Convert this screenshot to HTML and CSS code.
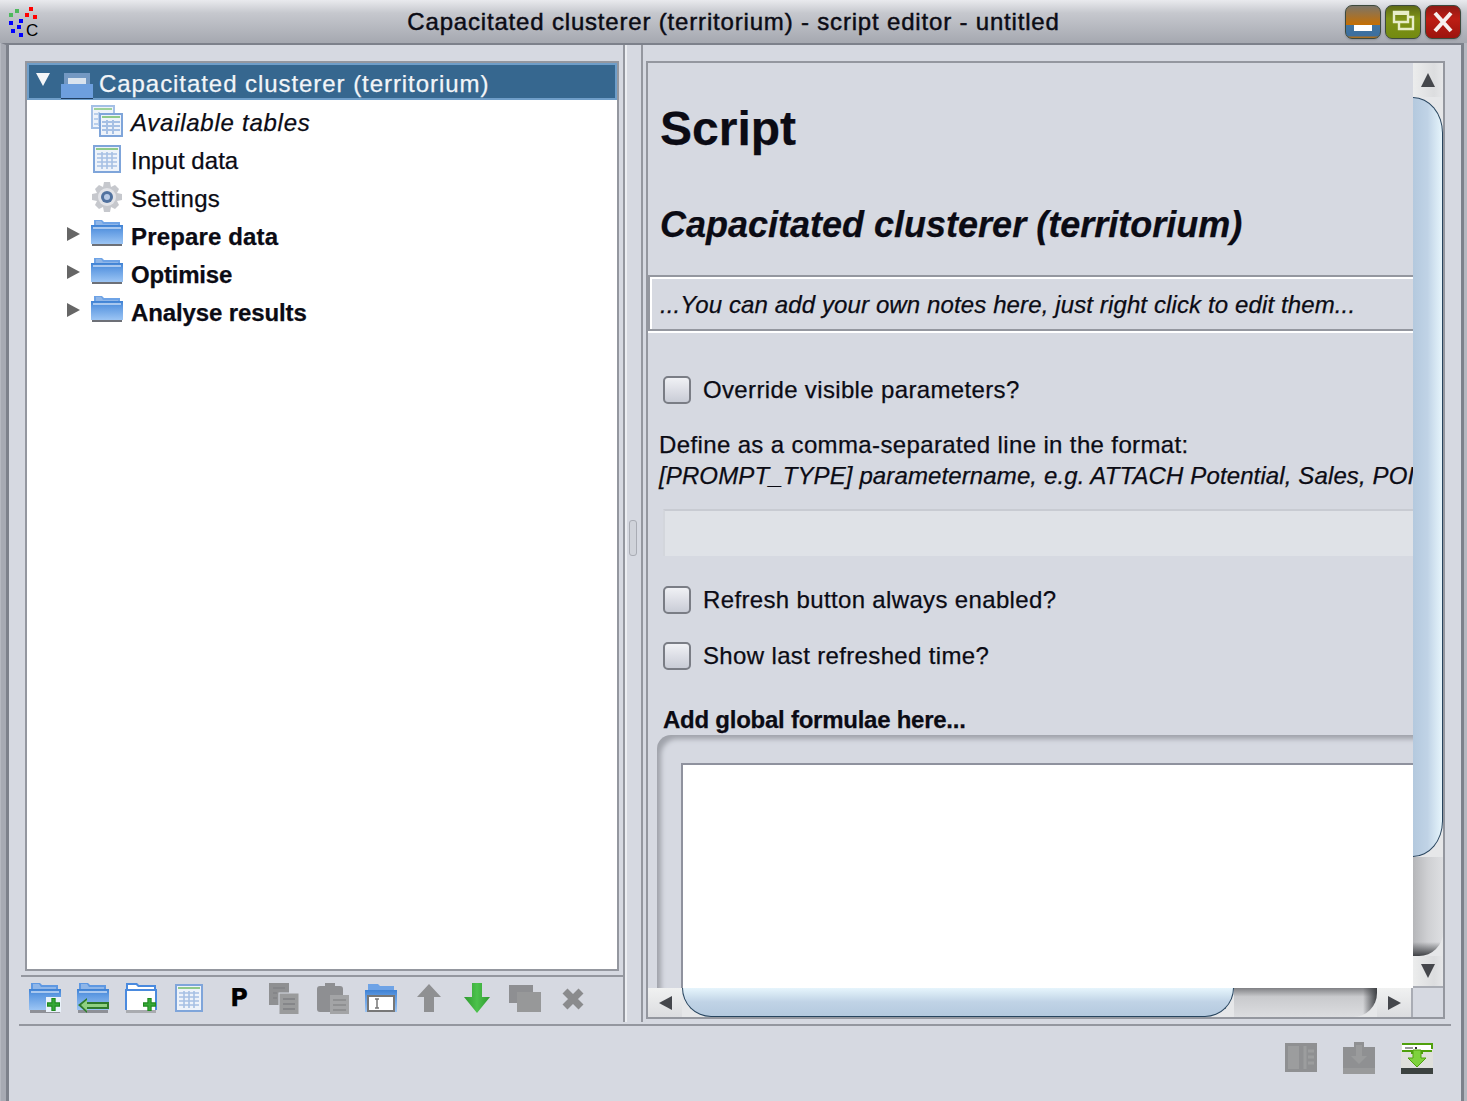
FILE: index.html
```html
<!DOCTYPE html>
<html lang="en">
<head>
    <meta charset="UTF-8">
    <meta name="viewport" content="width=device-width, initial-scale=1.0">
    <title>Capacitated clusterer (territorium) - script editor - untitled</title>
    <link rel="stylesheet" href="styles.css">
</head>
<body>
    <svg class="sprite" aria-hidden="true">
        <defs>
            <linearGradient id="folderBody" x1="0" y1="0" x2="0" y2="1">
                <stop offset="0" stop-color="#3f82d4"/>
                <stop offset=".3" stop-color="#5f9ae2"/>
                <stop offset="1" stop-color="#9cc5f4"/>
            </linearGradient>
            <linearGradient id="arrowGreen" x1="0" y1="0" x2="1" y2="0">
                <stop offset="0" stop-color="#2f9a2f"/>
                <stop offset=".5" stop-color="#4cc24c"/>
                <stop offset="1" stop-color="#2f9a2f"/>
            </linearGradient>
            <symbol id="folder" viewBox="0 0 32 32">
                <path d="M3 1h8l2 2h16v6H3z" fill="#6ea3e6"/>
                <path d="M5 2h5l2 3h15v2H5z" fill="#8fb6e8"/>
                <rect x="0" y="6" width="32" height="19" fill="url(#folderBody)"/>
                <rect x="2" y="8" width="28" height="2" fill="#a9c8ef"/>
                <rect x="1" y="25" width="30" height="2" fill="#6d7077"/>
            </symbol>
            <symbol id="folder-tall" viewBox="0 0 32 32">
                <path d="M2 1h9l2 2h16v6H2z" fill="#5e98e2"/>
                <path d="M4 2h6l2 3h15v3H4z" fill="#8fb6e8"/>
                <rect x="0" y="7" width="32" height="21" fill="url(#folderBody)"/>
                <rect x="2" y="9" width="28" height="2" fill="#a9c8ef"/>
                <rect x="1" y="28" width="30" height="3" fill="#8e9097"/>
            </symbol>
            <symbol id="table" viewBox="0 0 32 32">
                <rect x="3" y="3" width="26" height="26" fill="#eef3fa" stroke="#7fa5da" stroke-width="2"/>
                <rect x="5" y="5" width="22" height="2" fill="#8fc98a"/>
                <path d="M6 11h20M6 15h20M6 19h20M6 23h20M11 9v17M16 9v17M21 9v17" stroke="#a6c0e4" stroke-width="1.6"/>
            </symbol>
            <symbol id="tables" viewBox="0 0 32 32">
                <rect x="1" y="1" width="22" height="22" fill="#eef3fa" stroke="#a4c0e6" stroke-width="2"/>
                <rect x="3" y="3" width="18" height="2" fill="#9dd09a"/>
                <path d="M3 9h8M3 14h8M3 19h8M8 7v14" stroke="#b9cfec" stroke-width="2"/>
                <rect x="9" y="9" width="22" height="22" fill="#eef3fa" stroke="#7fa5da" stroke-width="2"/>
                <rect x="11" y="11" width="18" height="2" fill="#8fc98a"/>
                <path d="M11 17h18M11 21h18M11 25h18M16 15v14M22 15v14" stroke="#a6c0e4" stroke-width="2"/>
            </symbol>
            <symbol id="gear" viewBox="0 0 32 32">
                <path d="M13 1h6l1 5 4-2 4 4-2 4 5 1v6l-5 1 2 4-4 4-4-2-1 5h-6l-1-5-4 2-4-4 2-4-5-1v-6l5-1-2-4 4-4 4 2z" fill="#c6c8cd"/>
                <circle cx="16" cy="16" r="9" fill="#e3e4e8"/>
                <circle cx="16" cy="16" r="6" fill="#51729f"/>
                <circle cx="16" cy="16" r="3" fill="#b9cbe6"/>
            </symbol>
            <symbol id="plus" viewBox="0 0 12 12">
                <path d="M4 0h4v4h4v4H8v4H4V8H0V4h4z" fill="#1f8a1f"/>
                <path d="M5 1h2v4h4v2H7v4H5V7H1V5h4z" fill="#37a837"/>
            </symbol>
            <symbol id="docs" viewBox="0 0 32 32">
                <rect x="0" y="1" width="20" height="22" fill="#8f9092"/>
                <rect x="10" y="11" width="20" height="22" fill="#9a9b9c" stroke="#d6d9e1"/>
                <path d="M4 6h12M4 11h4M4 16h4M14 17h12M14 22h12M14 27h12" stroke="#858689" stroke-width="2"/>
            </symbol>
        </defs>
    </svg>

    <header class="titlebar">
        <svg class="app-icon" viewBox="0 0 40 40">
            <rect x="9" y="11" width="4" height="4" fill="#4cb85c"/>
            <rect x="15" y="7" width="4" height="4" fill="#4cb85c"/>
            <rect x="29" y="5" width="4" height="4" fill="#f00"/>
            <rect x="25" y="11" width="4" height="4" fill="#f00"/>
            <rect x="33" y="13" width="4" height="4" fill="#f00"/>
            <rect x="9" y="19" width="4" height="4" fill="#00f"/>
            <rect x="19" y="17" width="4" height="4" fill="#00f"/>
            <rect x="17" y="23" width="4" height="4" fill="#00f"/>
            <rect x="11" y="27" width="4" height="4" fill="#00f"/>
            <rect x="19" y="31" width="4" height="4" fill="#00f"/>
            <text x="26" y="34" class="app-letter">C</text>
        </svg>
        <div class="title">Capacitated clusterer (territorium) - script editor - untitled</div>
        <div class="win-buttons">
            <div class="win-btn win-min"><span class="min-bar"></span></div>
            <div class="win-btn win-max">
                <svg viewBox="0 0 36 34"><path d="M9 7h14v10H9zM23 12h5v12H14v-7" fill="none" stroke="#e8edc8" stroke-width="2.4"/><rect x="9" y="7" width="14" height="3" fill="#e8edc8"/></svg>
            </div>
            <div class="win-btn win-close">
                <svg viewBox="0 0 36 34"><path d="M10 8l16 18M26 8L10 26" stroke="#f6f0ee" stroke-width="4"/></svg>
            </div>
        </div>
    </header>

    <div class="frame">
        <div class="main">
            <section class="left-pane">
                <div class="tree">
                    <div class="tree-row selected">
                        <span class="twist-down"></span>
                        <svg class="icon" viewBox="0 0 32 32">
                            <path d="M3 1h26v14H3z" fill="#7398c2"/>
                            <rect x="7" y="6" width="18" height="6" fill="#d9e3ee"/>
                            <rect x="0" y="12" width="32" height="14" fill="#6d9fde"/>
                            <rect x="0" y="26" width="32" height="1" fill="#1f3f63"/>
                        </svg>
                        <span class="label">Capacitated clusterer (territorium)</span>
                    </div>
                    <div class="tree-row leaf"><svg class="icon"><use href="#tables"/></svg><em class="label ls-available">Available tables</em></div>
                    <div class="tree-row leaf"><svg class="icon"><use href="#table"/></svg><span class="label ls-input">Input data</span></div>
                    <div class="tree-row leaf"><svg class="icon"><use href="#gear"/></svg><span class="label ls-settings">Settings</span></div>
                    <div class="tree-row branch"><span class="twist-right"></span><svg class="icon"><use href="#folder"/></svg><strong class="label ls-prepare">Prepare data</strong></div>
                    <div class="tree-row branch"><span class="twist-right"></span><svg class="icon"><use href="#folder"/></svg><strong class="label ls-optimise">Optimise</strong></div>
                    <div class="tree-row branch"><span class="twist-right"></span><svg class="icon"><use href="#folder"/></svg><strong class="label ls-analyse">Analyse results</strong></div>
                </div>
                <div class="toolbar">
                    <svg class="icon" viewBox="0 0 32 32"><use href="#folder-tall" width="32" height="32"/><rect x="17" y="15" width="15" height="15" fill="#eaf2fb"/><use href="#plus" x="18" y="16" width="13" height="13"/></svg>
                    <svg class="icon" viewBox="0 0 32 32"><use href="#folder-tall" width="32" height="32"/><path d="M10 16v4h22v7H10v4L1 23z" fill="#2d7a2d"/><path d="M10 18v4h20v3H10v4L4 23z" fill="#8fd082"/></svg>
                    <svg class="icon" viewBox="0 0 32 32"><path d="M1 1h11l2 2h17v6H1z" fill="#4a8ade"/><path d="M3 3h8l2 2h16v4H3z" fill="#fff"/><rect x="0" y="7" width="32" height="21" fill="#4a8ade"/><rect x="2" y="9" width="28" height="19" fill="#fff"/><rect x="1" y="28" width="30" height="3" fill="#a9abb0"/><use href="#plus" x="18" y="16" width="13" height="13"/></svg>
                    <svg class="icon"><use href="#table"/></svg>
                    <span class="tool-p">P</span>
                    <svg class="icon"><use href="#docs"/></svg>
                    <svg class="icon" viewBox="0 0 32 32"><rect x="0" y="4" width="26" height="26" rx="3" fill="#8e8f92"/><rect x="8" y="1" width="10" height="6" fill="#8e8f92"/><rect x="13" y="13" width="19" height="19" fill="#a3a4a6"/><path d="M16 18h13M16 23h13M16 28h13" stroke="#8f9092" stroke-width="2"/></svg>
                    <svg class="icon" viewBox="0 0 32 32"><path d="M3 2h10l2 2h14v6H3z" fill="#6ea3e6"/><rect x="0" y="8" width="32" height="22" fill="url(#folderBody)"/><rect x="3" y="14" width="26" height="15" fill="#fff" stroke="#777" stroke-width="2"/><path d="M10 17h4M10 26h4M12 17v9" stroke="#777" stroke-width="1.5"/></svg>
                    <svg class="icon" viewBox="0 0 32 32"><path d="M16 2l12 13h-7v15h-10V15H4z" fill="#8f9092"/></svg>
                    <svg class="icon" viewBox="0 0 32 32"><path d="M11 1h10v14h8L16 31 3 15h8z" fill="url(#arrowGreen)"/></svg>
                    <svg class="icon" viewBox="0 0 32 32"><rect x="0" y="3" width="24" height="18" fill="#8e8f92"/><rect x="8" y="10" width="24" height="20" fill="#979899"/></svg>
                    <svg class="icon" viewBox="0 0 32 32"><path d="M8 9l16 16M24 9L8 25" stroke="#8a8b8d" stroke-width="7"/></svg>
                </div>
            </section>

            <div class="splitter"><span class="grip"></span></div>

            <section class="script-pane">
                <div class="viewport">
                    <h1>Script</h1>
                    <h2>Capacitated clusterer (territorium)</h2>
                    <div class="notes"><em>...You can add your own notes here, just right click to edit them...</em></div>
                    <label class="check first"><span class="box"></span>Override visible parameters?</label>
                    <p class="help">Define as a comma-separated line in the format:</p>
                    <p class="help sample"><em>[PROMPT_TYPE] parametername, e.g. ATTACH Potential, Sales, POI</em></p>
                    <div class="param-input"></div>
                    <label class="check second"><span class="box"></span>Refresh button always enabled?</label>
                    <label class="check third"><span class="box"></span>Show last refreshed time?</label>
                    <h3>Add global formulae here...</h3>
                    <div class="formula-well"><div class="formula-text"></div></div>
                </div>
                <div class="vscroll">
                    <div class="sb-btn up"><span class="arrow-up"></span></div>
                    <div class="v-thumb"></div>
                    <div class="v-track"></div>
                    <div class="sb-btn down"><span class="arrow-down"></span></div>
                </div>
                <div class="hscroll">
                    <div class="sb-btn left"><span class="arrow-left"></span></div>
                    <div class="h-thumb"></div>
                    <div class="h-track"></div>
                    <div class="sb-btn right"><span class="arrow-right"></span></div>
                </div>
                <div class="corner"></div>
            </section>
        </div>

        <footer class="bottom">
            <svg class="icon" viewBox="0 0 32 32"><rect x="0" y="1" width="32" height="29" fill="#8f9092"/><rect x="3" y="4" width="11" height="23" fill="#9c9d9e"/><path d="M20 4v23M23 9h6M23 15h6M23 21h6" stroke="#9c9d9e" stroke-width="3"/></svg>
            <svg class="icon" viewBox="0 0 32 32"><path d="M11 0h10v5h11v27H0V5h11z" fill="#8f9092"/><path d="M13 3h6v11h5l-8 8-8-8h5z" fill="#9a9b9c"/><rect x="0" y="26" width="32" height="6" fill="#999a9b"/></svg>
            <svg class="icon" viewBox="0 0 32 32"><rect x="0" y="1" width="32" height="31" fill="#dfe0dc"/><rect x="1" y="2" width="30" height="6" fill="#fff"/><path d="M1 2h30v5" fill="none" stroke="#4fa00c" stroke-width="2"/><rect x="4" y="5" width="8" height="2" fill="#999"/><rect x="14" y="5" width="2" height="2" fill="#333"/><path d="M1 9h10v3M31 9H21v3" fill="none" stroke="#4fa00c" stroke-width="2"/><path d="M12 8h8v8h5l-9 9-9-9h5z" fill="#7ed23c" stroke="#4fa00c"/><rect x="0" y="26" width="32" height="6" fill="#3c4240"/></svg>
        </footer>
    </div>
</body>
</html>
```

FILE: styles.css
```css
* {
    box-sizing: border-box;
}

html, body {
    margin: 0;
    padding: 0;
}

body {
    width: 1467px;
    height: 1101px;
    overflow: hidden;
    font-family: "Liberation Sans", Arial, sans-serif;
    font-size: 24px;
    color: #0b0b14;
    background-color: #b5b8c0;
    -webkit-text-stroke-width: 0.25px;
}

.sprite {
    display: block;
    width: 0;
    height: 0;
}

.icon {
    display: block;
    flex: none;
    width: 32px;
    height: 32px;
}

/* title bar */
.titlebar {
    display: grid;
    grid-template-columns: 1fr auto 1fr;
    align-items: center;
    height: 43px;
    background: linear-gradient(#e9eaee, #c6c8ce 30%, #a5a8b0);
}

.app-icon {
    width: 40px;
    height: 40px;
}

.app-letter {
    font-family: "Liberation Sans", sans-serif;
    font-size: 17px;
    fill: #000;
}

.title {
    font-size: 24px;
    letter-spacing: 0.82px;
    -webkit-text-stroke-width: 0.45px;
}

.win-buttons {
    display: flex;
    justify-content: flex-end;
    gap: 4px;
    padding-right: 6px;
}

.win-btn {
    position: relative;
    display: flex;
    align-items: center;
    justify-content: center;
    width: 36px;
    height: 34px;
    border: 1px solid #3d4a3e;
    border-radius: 7px;
    box-shadow: 0 1px 2px #8b8e96;
}

.win-btn svg {
    width: 36px;
    height: 34px;
    flex: none;
}

.win-min {
    background: linear-gradient(#7c7568, #c46f04 58%, #c46f04 60%, #42749f 60%, #3c6f9f 92%, #c46f04);
}

.min-bar {
    width: 18px;
    height: 6px;
    margin-top: 13px;
    background-color: #fff;
}

.win-max {
    background: linear-gradient(#5e6a16, #7f9316 40%, #738a10);
}

.win-close {
    background: linear-gradient(#8e1a14, #bd1d14 40%, #9c140e);
}

/* window frame */
.frame {
    display: flex;
    flex-direction: column;
    height: 1058px;
    margin: 0 3px 0 1px;
    padding-left: 3px;
    background-color: #d6d9e1;
    border-top: 2px solid #7d818b;
    border-left: 5px solid #a7aab3;
    border-right: 3px solid #7d818b;
    box-shadow: inset 3px 0 0 #7d818b;
}

.main {
    display: flex;
    height: 978px;
}

/* left pane */
.left-pane {
    display: flex;
    flex-direction: column;
    flex: none;
    width: 614px;
    padding-top: 16px;
}

.tree {
    height: 910px;
    margin-left: 16px;
    margin-right: 4px;
    background-color: #fff;
    border: 2px solid #94979f;
}

.tree-row {
    display: flex;
    align-items: center;
    height: 38px;
}

.tree-row .label {
    padding-top: 4px;
}

.tree-row.selected {
    height: 37px;
    margin-bottom: 2px;
    padding-left: 7px;
    letter-spacing: 0.94px;
    color: #f2f5f8;
    background-color: #36678f;
    border: 2px solid #6f9ec9;
}

.tree-row.selected .icon {
    margin-top: 12px;
    margin-left: 11px;
    margin-right: 6px;
}

.tree-row.leaf {
    padding-left: 64px;
}

.tree-row.leaf .icon {
    margin-right: 8px;
}

.tree-row.branch {
    padding-left: 40px;
}

.tree-row.branch .icon {
    margin-left: 11px;
    margin-right: 8px;
}

.ls-available {
    letter-spacing: 0.74px;
}

.ls-input {
    letter-spacing: 0.05px;
}

.ls-settings {
    letter-spacing: 0.3px;
}

.ls-prepare {
    letter-spacing: 0.15px;
}

.ls-optimise {
    letter-spacing: -0.2px;
}

.ls-analyse {
    letter-spacing: -0.12px;
}

.twist-down {
    width: 0;
    height: 0;
    margin-bottom: 4px;
    border-left: 7px solid transparent;
    border-right: 7px solid transparent;
    border-top: 13px solid #f4f6f8;
}

.twist-right {
    width: 0;
    height: 0;
    margin-bottom: 2px;
    border-top: 7px solid transparent;
    border-bottom: 7px solid transparent;
    border-left: 13px solid #666;
}

.toolbar {
    display: flex;
    align-items: flex-start;
    gap: 16px;
    height: 47px;
    margin-top: 4px;
    margin-left: 12px;
    padding-left: 8px;
    padding-top: 5px;
    border-top: 2px solid #94979f;
}

.tool-p {
    width: 32px;
    padding-left: 4px;
    font-family: "DejaVu Sans", sans-serif;
    font-size: 24px;
    font-weight: bold;
    line-height: 32px;
    text-align: center;
    color: #000;
}

/* splitter */
.splitter {
    display: flex;
    flex: none;
    align-items: center;
    justify-content: center;
    width: 20px;
    height: 977px;
    border-left: 2px solid #94979f;
    border-right: 2px solid #94979f;
    box-shadow: inset 2px 0 0 #eceef2;
}

.grip {
    display: block;
    width: 8px;
    height: 36px;
    margin-top: 9px;
    background-color: #d0d3da;
    border: 1px solid #a9acb4;
    border-radius: 3px;
}

/* script pane */
.script-pane {
    display: grid;
    grid-template-columns: 765px 30px;
    grid-template-rows: 925px 29px;
    flex: none;
    width: 799px;
    height: 958px;
    margin-top: 16px;
    margin-left: 3px;
    border: 2px solid #94979f;
}

.viewport {
    overflow: hidden;
    white-space: nowrap;
}

.viewport h1 {
    margin: 38px 0 0 12px;
    font-size: 48px;
    line-height: 56px;
}

.viewport h2 {
    margin: 47px 0 0 12px;
    font-size: 36px;
    font-style: italic;
    line-height: 42px;
}

.notes {
    height: 56px;
    margin-top: 29px;
    padding: 13px 0 0 10px;
    line-height: 30px;
    letter-spacing: 0.12px;
    border: 2px solid #94979f;
    border-right: none;
    box-shadow: inset 2px 2px 0 #fff, 0 2px 0 #fff;
}

.check {
    display: flex;
    align-items: center;
    gap: 12px;
    height: 28px;
    margin-left: 15px;
    letter-spacing: 0.35px;
}

.check.first {
    margin-top: 45px;
}

.check.second {
    margin-top: 30px;
}

.check.third {
    margin-top: 28px;
}

.box {
    flex: none;
    width: 28px;
    height: 28px;
    background: linear-gradient(#f0f1f5, #c9ccd6);
    border: 2px solid #7a7d85;
    border-radius: 5px;
}

.help {
    margin: 0 0 0 11px;
    line-height: 32px;
    letter-spacing: 0.37px;
}

.check + .help {
    margin-top: 25px;
}

.help.sample {
    letter-spacing: 0.12px;
    margin-top: -1px;
}

.param-input {
    height: 47px;
    margin-top: 17px;
    margin-left: 15px;
    background-color: #dfe2e7;
    border-top: 2px solid #c8cbd2;
    border-left: 2px solid #d3d6dc;
}

.viewport h3 {
    margin: 36px 0 0 15px;
    font-size: 24px;
    line-height: 28px;
    letter-spacing: -0.25px;
}

.formula-well {
    height: 255px;
    margin-top: 1px;
    margin-left: 9px;
    padding: 28px 0 0 24px;
    border-radius: 14px 0 0 0;
    box-shadow: inset 6px 6px 5px -2px #a0a3ab;
}

.formula-text {
    height: 100%;
    background-color: #fff;
    border-top: 2px solid #8f929e;
    border-left: 2px solid #8f929e;
}

/* scrollbars */
.vscroll {
    display: flex;
    flex-direction: column;
    background-color: #e6e7e9;
    border-bottom: 2px solid #a9acb4;
}

.hscroll {
    display: flex;
    background-color: #e6e7e9;
    border-right: 2px solid #a9acb4;
}

.sb-btn {
    display: flex;
    flex: none;
    align-items: center;
    justify-content: center;
    background: linear-gradient(90deg, #eceded, #dcdddf 70%, #e6e7e9);
}

.sb-btn.up {
    height: 34px;
}

.sb-btn.down {
    height: 30px;
}

.sb-btn.left, .sb-btn.right {
    width: 34px;
    background: linear-gradient(#f0f1f1, #dcdde0);
}

.v-thumb {
    flex: none;
    height: 760px;
    background: linear-gradient(90deg, #b4c9de, #c0d3e6 50%, #e6f5fc);
    border: 1.5px solid #27445e;
    border-left: none;
    border-radius: 0 30px 30px 0 / 0 36px 36px 0;
}

.v-track {
    flex: 1;
    background: linear-gradient(0deg, #3f4145, rgba(63, 65, 69, 0) 14px), linear-gradient(90deg, #b5b6b9, #cfd0d3 50%, #dedfe2);
    border-radius: 0 0 24px 0;
}

.h-thumb {
    flex: none;
    width: 552px;
    background: linear-gradient(#e6f5fc, #c0d3e6 50%, #b4c9de);
    border: 1.5px solid #27445e;
    border-top: none;
    border-radius: 0 0 30px 30px / 0 0 30px 30px;
}

.h-track {
    flex: 1;
    background: linear-gradient(270deg, #3f4145, rgba(63, 65, 69, 0) 14px), linear-gradient(#7f8084, #c9cacd 30%, #dcdde0);
    border-radius: 0 0 24px 0;
}

.arrow-up, .arrow-down {
    width: 0;
    height: 0;
    border-left: 7px solid transparent;
    border-right: 7px solid transparent;
}

.arrow-up {
    border-bottom: 14px solid #45474c;
}

.arrow-down {
    border-top: 14px solid #45474c;
}

.arrow-left, .arrow-right {
    width: 0;
    height: 0;
    border-top: 7px solid transparent;
    border-bottom: 7px solid transparent;
}

.arrow-left {
    border-right: 13px solid #45474c;
}

.arrow-right {
    border-left: 13px solid #45474c;
}

/* bottom row */
.bottom {
    display: flex;
    justify-content: flex-end;
    gap: 26px;
    height: 78px;
    margin-top: 2px;
    margin-left: 10px;
    margin-right: 10px;
    padding-top: 16px;
    padding-right: 18px;
    border-top: 2px solid #94979f;
}
```
